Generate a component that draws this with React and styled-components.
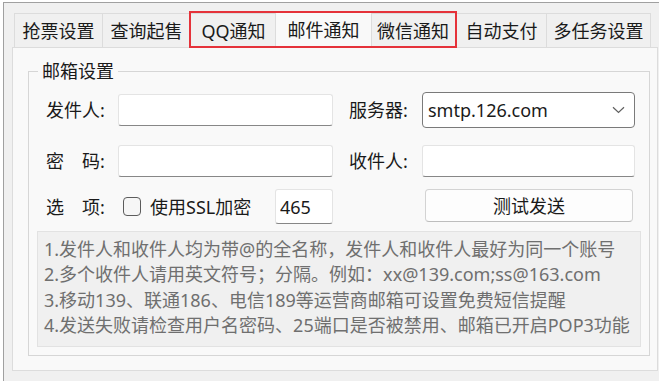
import React from "react";
import styled, { createGlobalStyle } from "styled-components";

const GlobalStyle = createGlobalStyle`
  html, body { margin: 0; padding: 0; background: #ffffff; height: 100%; overflow: hidden; }
  body { font-family: "Noto Sans", "Noto Sans CJK SC", sans-serif; color: #1a1a1a; }
  #root { height: 100%; }
`;

const Frame = styled.div`
  box-sizing: border-box;
  margin: 2px 0 0 3px;
  min-height: calc(100% - 2px);
  border-top: 1px solid #a0a0a0;
  border-left: 1px solid #a0a0a0;
  background: #f0f0f0;
  padding: 8px 1px 9px 8px;
`;

const TabStrip = styled.div`
  position: relative;
  display: flex;
  align-items: flex-end;
  height: 36px;
  padding-left: 2px;
`;

const Tab = styled.div`
  position: relative;
  z-index: ${(p) => (p.$active ? 1 : 0)};
  box-sizing: border-box;
  flex: none;
  width: ${(p) => p.$w}px;
  height: ${(p) => (p.$active ? 37 : 34)}px;
  margin: 0 ${(p) => (p.$active ? -2 : 0)}px ${(p) => (p.$active ? -1 : 0)}px;
  display: flex;
  align-items: center;
  justify-content: center;
  background: ${(p) => (p.$active ? "#f9f9f9" : "#f0f0f0")};
  border-top: 1px solid #dcdcdc;
  border-right: 1px solid #dcdcdc;
  border-left: ${(p) => (p.$first || p.$active ? "1px solid #dcdcdc" : "none")};
  font-size: 18px;
  line-height: 20px;
  white-space: nowrap;
  color: #1a1a1a;
`;

const Highlight = styled.div`
  position: absolute;
  z-index: 2;
  left: 177px;
  top: 0;
  width: 268px;
  height: 37px;
  box-sizing: border-box;
  border: 2px solid #e5323a;
  pointer-events: none;
`;

const Panel = styled.div`
  background: #f9f9f9;
  border: 1px solid #dcdcdc;
  padding: 13px 7px 14px 15px;
`;

const Group = styled.fieldset`
  margin: 0;
  min-width: 0;
  border: 1px solid #d6d6d6;
  padding: 11px 8px 8px 8px;
`;

const Legend = styled.legend`
  padding: 0 4px;
  margin-left: 1px;
  font-size: 18px;
  line-height: 20px;
  color: #1a1a1a;
`;

const Form = styled.div`
  margin-left: 9px;
`;

const Row = styled.div`
  display: grid;
  grid-template-columns: 72px 215px 89px 213px;
  align-items: center;
  height: ${(p) => p.$h}px;
  margin-top: ${(p) => p.$mt || 0}px;
`;

const Label = styled.div`
  font-size: 18px;
  line-height: 20px;
  white-space: nowrap;
  padding-left: ${(p) => (p.$right ? 16 : 0)}px;
  color: #1a1a1a;
`;

const TextBox = styled.input`
  box-sizing: border-box;
  width: ${(p) => p.$w || 215}px;
  height: ${(p) => p.$h || 32}px;
  margin: 0;
  padding: 0 4px;
  background: #ffffff;
  border: 1px solid #e4e4e4;
  border-bottom-color: #878787;
  border-radius: 3px;
  font-family: inherit;
  font-size: 18px;
  color: #1a1a1a;
  outline: none;
`;

const Select = styled.div`
  box-sizing: border-box;
  width: 213px;
  height: 36px;
  display: flex;
  align-items: center;
  justify-content: space-between;
  padding: 0 9px 0 5px;
  background: #ffffff;
  border: 1px solid #7a7a7a;
  border-radius: 4px;
  font-size: 18px;
  line-height: 20px;
  color: #1a1a1a;
`;

const OptionCell = styled.div`
  display: flex;
  align-items: center;
  height: 100%;
`;

const CheckBox = styled.span`
  box-sizing: border-box;
  width: 18px;
  height: 19px;
  margin-left: 5px;
  border: 1px solid #5c5c5c;
  border-radius: 4px;
  background: #f6f6f6;
`;

const CheckText = styled.span`
  margin-left: 9px;
  font-size: 18px;
  line-height: 20px;
  white-space: nowrap;
`;

const PortBox = styled(TextBox)`
  margin-left: auto;
`;

const Button = styled.div`
  box-sizing: border-box;
  width: 208px;
  height: 33px;
  margin-left: 3px;
  align-self: start;
  display: flex;
  align-items: center;
  justify-content: center;
  background: #fdfdfd;
  border: 1px solid #d3d3d3;
  border-bottom-color: #bdbdbd;
  border-radius: 4px;
  font-size: 18px;
  line-height: 20px;
  color: #1a1a1a;
`;

const Notes = styled.div`
  box-sizing: border-box;
  height: 116px;
  margin-top: 7px;
  padding: 5px 6px;
  background: #f0f0f0;
  border: 1px solid #e2e2e2;
  overflow: hidden;
`;

const NoteLine = styled.div`
  font-size: 18px;
  line-height: 25.3px;
  white-space: nowrap;
  color: #6f6f6f;
`;

const Chevron = () => (
  <svg width="13" height="8" viewBox="0 0 13 8" fill="none">
    <path d="M1 1.2 L6.5 6.5 L12 1.2" stroke="#606060" strokeWidth="1.2" />
  </svg>
);

const tabs = [
  { label: "抢票设置", w: 89 },
  { label: "查询起售", w: 88 },
  { label: "QQ通知", w: 86 },
  { label: "邮件通知", w: 97, active: true },
  { label: "微信通知", w: 87 },
  { label: "自动支付", w: 90 },
  { label: "多任务设置", w: 104 },
];

const notes = [
  "1.发件人和收件人均为带@的全名称，发件人和收件人最好为同一个账号",
  "2.多个收件人请用英文符号；分隔。例如：xx@139.com;ss@163.com",
  "3.移动139、联通186、电信189等运营商邮箱可设置免费短信提醒",
  "4.发送失败请检查用户名密码、25端口是否被禁用、邮箱已开启POP3功能",
];

export default function App() {
  return (
    <>
      <GlobalStyle />
      <Frame>
        <TabStrip>
          {tabs.map((t, i) => (
            <Tab key={t.label} $w={t.w} $active={t.active} $first={i === 0}>
              {t.label}
            </Tab>
          ))}
          <Highlight />
        </TabStrip>
        <Panel>
          <Group>
            <Legend>邮箱设置</Legend>
            <Form>
              <Row $h={36}>
                <Label>发件人:</Label>
                <TextBox readOnly />
                <Label $right>服务器:</Label>
                <Select>
                  <span>smtp.126.com</span>
                  <Chevron />
                </Select>
              </Row>
              <Row $h={32} $mt={17}>
                <Label>密　码:</Label>
                <TextBox readOnly />
                <Label $right>收件人:</Label>
                <TextBox readOnly $w={213} />
              </Row>
              <Row $h={35} $mt={12}>
                <Label>选　项:</Label>
                <OptionCell>
                  <CheckBox />
                  <CheckText>使用SSL加密</CheckText>
                  <PortBox readOnly value="465" $w={58} $h={35} />
                </OptionCell>
                <span />
                <Button>测试发送</Button>
              </Row>
            </Form>
            <Notes>
              {notes.map((n) => (
                <NoteLine key={n}>{n}</NoteLine>
              ))}
            </Notes>
          </Group>
        </Panel>
      </Frame>
    </>
  );
}
